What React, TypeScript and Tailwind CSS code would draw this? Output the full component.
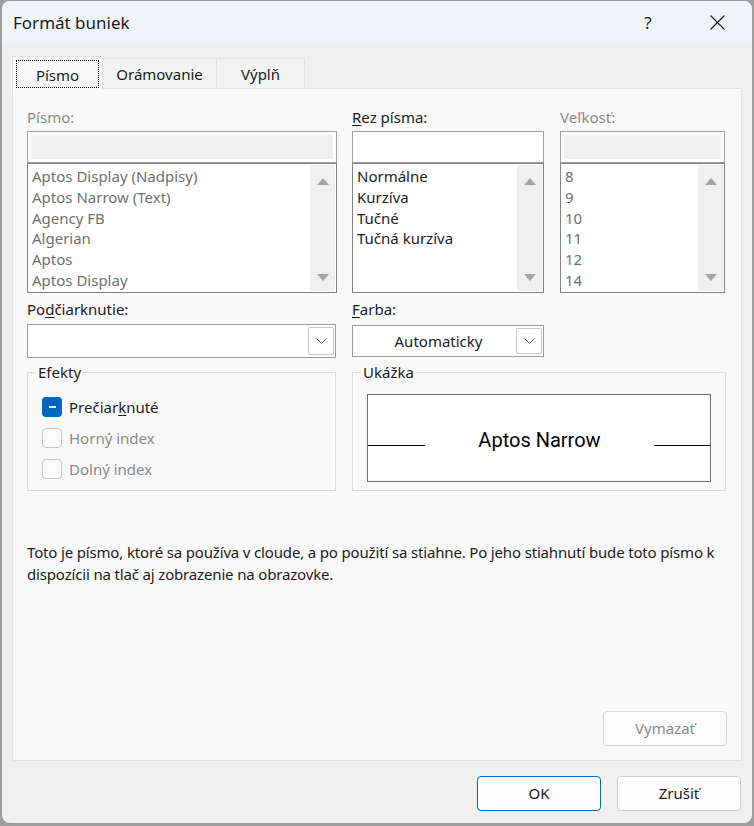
import React from 'react';

const ui = "font-['Noto_Sans',sans-serif]";

function Tri({ up }: { up?: boolean }) {
  return (
    <svg width="12" height="7" viewBox="0 0 12 7">
      <polygon points={up ? '0,7 6,0 12,7' : '0,0 12,0 6,7'} fill="#a4a4a4" />
    </svg>
  );
}

function ListBox({ items, muted }: { items: string[]; muted?: boolean }) {
  return (
    <div className="h-[130px] border border-[#828282] bg-white flex">
      <div className={`flex-1 pl-[4px] pt-[2px] overflow-hidden ${muted ? 'text-[#6f6f6f]' : 'text-[#1b1b1b]'}`}>
        {items.map(t => (
          <div key={t} className="h-[20.8px] leading-[20.8px] whitespace-nowrap">{t}</div>
        ))}
      </div>
      <div className="w-[25px] my-px mr-px bg-[#f0f0f0] flex flex-col items-center justify-between pt-[13px] pb-[10px]">
        <Tri up />
        <Tri />
      </div>
    </div>
  );
}

function TextBox({ disabled }: { disabled?: boolean }) {
  return (
    <div className="h-[32px] border border-[#a0a0a0] bg-white p-[3px]">
      {disabled && <div className="h-full bg-[#f0f0f0]" />}
    </div>
  );
}

function Chevron() {
  return (
    <svg width="11" height="6" viewBox="0 0 11 6">
      <path d="M0.5 0.5 L5.5 5.5 L10.5 0.5" fill="none" stroke="#5c5c5c" strokeWidth="1" />
    </svg>
  );
}

function Select({ value, h }: { value?: string; h: string }) {
  return (
    <div className={`${h} border border-[#9a9a9a] bg-white flex items-center pr-[1px]`}>
      <div className="flex-1 text-center text-[#1b1b1b] pl-[8px]">{value}</div>
      <div className="w-[26px] self-stretch my-[2px] border border-[#c6c6c6] rounded-[2px] bg-white flex items-center justify-center">
        <Chevron />
      </div>
    </div>
  );
}

function Group({ title, className, children }: { title: string; className: string; children: React.ReactNode }) {
  return (
    <div className={`relative h-[119px] border border-[#dcdcdc] ${className}`}>
      <span className="absolute left-[8px] -top-[11px] px-[2px] bg-[#f9f9f9] leading-[20px] text-[#1b1b1b]">{title}</span>
      {children}
    </div>
  );
}

function Check({ label, checked, under }: { label: string; checked?: boolean; under?: [string, string, string] }) {
  return (
    <div className="flex items-center gap-[7px] h-[20px]">
      {checked ? (
        <div className="w-[20px] h-[20px] rounded-[4px] bg-[#0067c0] flex items-center justify-center">
          <div className="w-[7px] h-[2px] bg-white" />
        </div>
      ) : (
        <div className="w-[20px] h-[20px] rounded-[4px] border border-[#c8c8c8] bg-[#fbfbfb]" />
      )}
      <span className={checked ? 'text-[#1b1b1b]' : 'text-[#8a8a8a]'}>
        {under ? (
          <>
            {under[0]}
            <span className="underline underline-offset-2">{under[1]}</span>
            {under[2]}
          </>
        ) : (
          label
        )}
      </span>
    </div>
  );
}

export default function App() {
  return (
    <div className={`w-[754px] h-[826px] bg-[#9e9e9e] pt-px px-[2px] pb-[3px] ${ui} text-[15px]`}>
      <div className="h-full rounded-[8px] overflow-hidden bg-[#f0f0f0] flex flex-col">
        {/* Title bar */}
        <div className="h-[43px] shrink-0 bg-[#eff4f9] flex items-center pl-[11px] pr-[12px]">
          <span className="flex-1 text-[17px] text-[#1b1b1b]">Formát buniek</span>
          <span className="w-[46px] text-center text-[17px] text-[#1b1b1b]">?</span>
          <span className="w-[46px] ml-[23px] flex items-center justify-center">
            <svg width="15" height="15" viewBox="0 0 15 15">
              <path d="M0.5 0.5 L14.5 14.5 M14.5 0.5 L0.5 14.5" stroke="#1b1b1b" strokeWidth="1.1" />
            </svg>
          </span>
        </div>

        {/* Tabs */}
        <div className="px-[10px] pt-[12px] flex flex-col">
          <div className="flex items-end">
            <div className="relative z-10 -mb-px w-[91px] h-[33px] border border-b-0 border-[#e0e0e0] bg-[#f9f9f9] px-[3px] pt-[3px] pb-[1px] flex">
              <div className="flex-1 border border-dotted border-black flex items-center justify-center pt-[3px] text-[#1b1b1b]">Písmo</div>
            </div>
            <div className="w-[114px] h-[30px] border border-l-0 border-b-0 border-[#e3e3e3] bg-[#f3f3f3] flex items-center justify-center pt-[2px] text-[#1b1b1b]">Orámovanie</div>
            <div className="w-[88px] h-[30px] border border-l-0 border-b-0 border-[#e3e3e3] bg-[#f3f3f3] flex items-center justify-center pt-[2px] text-[#1b1b1b]">Výplň</div>
          </div>

          {/* Panel */}
          <div className="h-[673px] border border-[#e3e3e3] bg-[#f9f9f9] px-[14px] pt-[18px] pb-[14px] flex flex-col">
            <div className="flex">
              <div className="w-[310px]">
                <div className="h-[20px] leading-[20px] text-[#8a8a8a]">Písmo:</div>
                <div className="mt-[4px]"><TextBox disabled /></div>
                <ListBox muted items={['Aptos Display (Nadpisy)', 'Aptos Narrow (Text)', 'Agency FB', 'Algerian', 'Aptos', 'Aptos Display']} />
              </div>
              <div className="w-[192px] ml-[15px]">
                <div className="h-[20px] leading-[20px] text-[#1b1b1b]"><span className="underline underline-offset-2">R</span>ez písma:</div>
                <div className="mt-[4px]"><TextBox /></div>
                <ListBox items={['Normálne', 'Kurzíva', 'Tučné', 'Tučná kurzíva']} />
              </div>
              <div className="w-[165px] ml-[16px]">
                <div className="h-[20px] leading-[20px] text-[#8a8a8a]">Veľkosť:</div>
                <div className="mt-[4px]"><TextBox disabled /></div>
                <ListBox muted items={['8', '9', '10', '11', '12', '14']} />
              </div>
            </div>

            <div className="flex mt-[6px]">
              <div className="w-[309px]">
                <div className="h-[20px] leading-[20px] text-[#1b1b1b]">Po<span className="underline underline-offset-2">d</span>čiarknutie:</div>
                <div className="mt-[5px]"><Select h="h-[34px]" /></div>
              </div>
              <div className="w-[192px] ml-[16px]">
                <div className="h-[20px] leading-[20px] text-[#1b1b1b]"><span className="underline underline-offset-2">F</span>arba:</div>
                <div className="mt-[6px]"><Select h="h-[32px]" value="Automaticky" /></div>
              </div>
            </div>

            <div className="flex mt-[14px]">
              <Group title="Efekty" className="w-[309px] pl-[14px] pt-[24px] flex flex-col gap-[11px]">
                <Check label="Prečiarknuté" checked under={['Prečiar', 'k', 'nuté']} />
                <Check label="Horný index" />
                <Check label="Dolný index" />
              </Group>
              <Group title="Ukážka" className="w-[374px] ml-[16px] pl-[14px] pr-[14px] pt-[21px]">
                <div className="h-[88px] border border-[#6e6e6e] bg-white flex items-center">
                  <div className="w-[57px] h-px bg-black mt-[14px]" />
                  <div className="flex-1 text-center font-['Roboto',sans-serif] text-[20px] text-black pt-[3px]">Aptos Narrow</div>
                  <div className="w-[56px] h-px bg-black mt-[14px]" />
                </div>
              </Group>
            </div>

            <p className="mt-[50px] leading-[22px] text-[#1b1b1b] tracking-[-0.16px] whitespace-nowrap">
              Toto je písmo, ktoré sa používa v cloude, a po použití sa stiahne. Po jeho stiahnutí bude toto písmo k
              <br />
              dispozícii na tlač aj zobrazenie na obrazovke.
            </p>

            <div className="flex-1" />
            <div className="flex justify-end">
              <div className="w-[124px] h-[35px] rounded-[4px] border border-[#d6d6d6] bg-[#fbfbfb] flex items-center justify-center text-[#8a8a8a]">Vymazať</div>
            </div>
          </div>
        </div>

        {/* Footer */}
        <div className="flex-1 flex justify-end items-end gap-[16px] pr-[11px] pb-[12px]">
          <div className="w-[124px] h-[35px] rounded-[4px] border border-[#0067c0] bg-[#fdfdfd] flex items-center justify-center text-[#1b1b1b]">OK</div>
          <div className="w-[124px] h-[35px] rounded-[4px] border border-[#d0d0d0] bg-[#fdfdfd] flex items-center justify-center text-[#1b1b1b]">Zrušiť</div>
        </div>
      </div>
    </div>
  );
}
